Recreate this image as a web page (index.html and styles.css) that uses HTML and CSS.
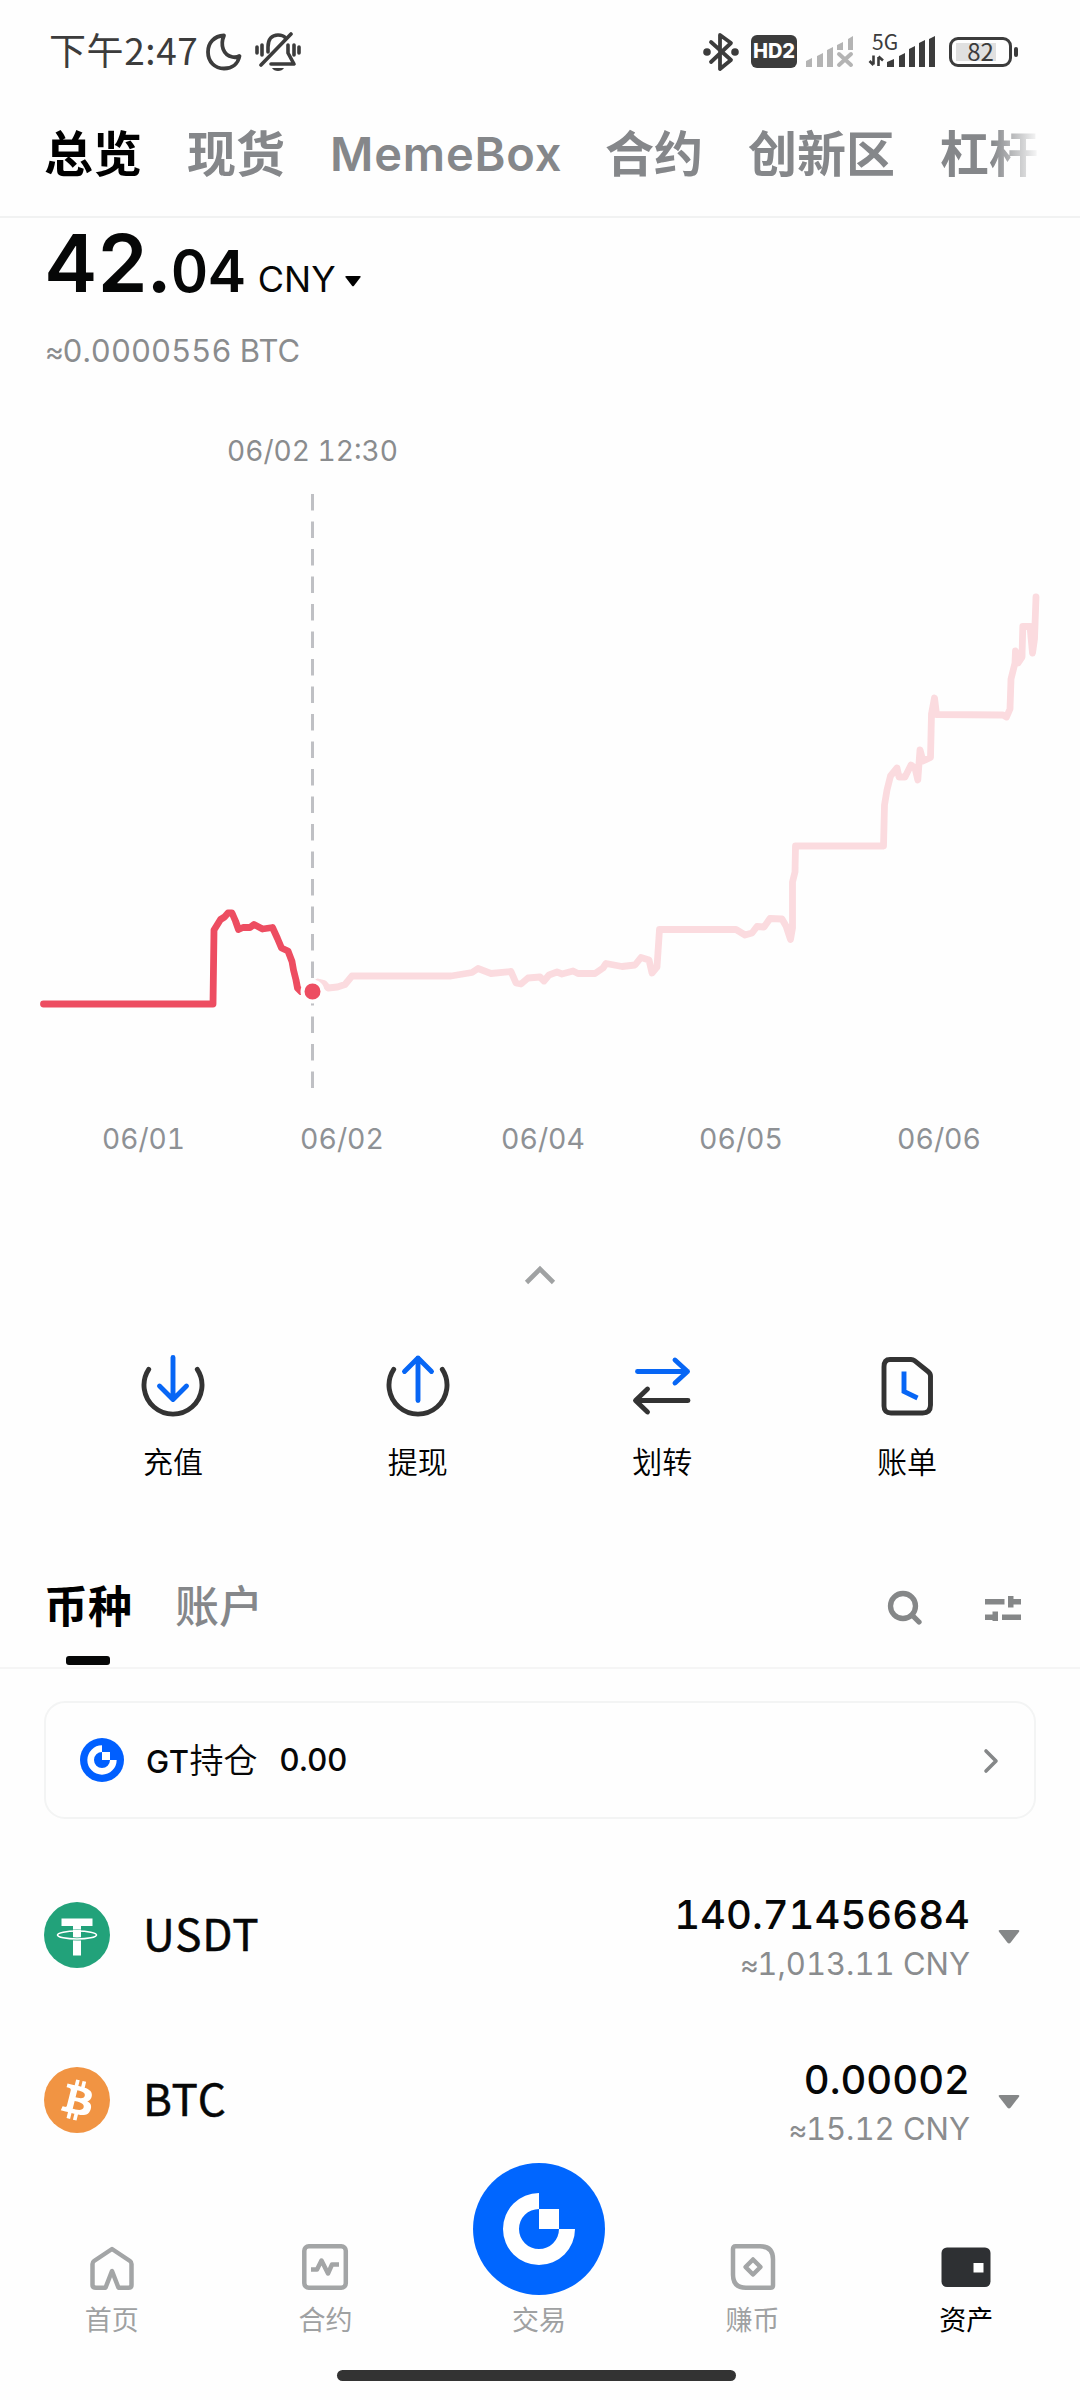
FILE: index.html
```html
<!DOCTYPE html>
<html lang="zh-CN">
<head>
<meta charset="utf-8">
<title>资产总览</title>
<link rel="stylesheet" href="styles.css">
</head>
<body>
<header class="status">
  <div class="status-left">
    <span class="clock">下午2:47</span>
    <svg class="moon" width="36" height="38" viewBox="0 0 36 38"><path d="M18 2.500C8 3 2 10 2 19c0 10 7 16.500 16 16.500 8 0 14-4.500 15.500-12.500-2 1.200-4.500 1.500-7 1C17 22 14 12 18 2.500Z"/></svg>
    <svg class="bell" width="46" height="40" viewBox="0 0 46 40">
      <path class="ln" d="M2 15v6M7 13v10M39 13v10M44 15v6"/>
      <path class="ln" d="M13 20v-5C13 7 17 3 23 3c3.500 0 6 1 7.500 3"/>
      <path class="ln" d="M33 13v8l6 11H16"/>
      <path class="ln" d="M36 2 6 33"/>
      <path d="M17 36h12c-2 4-10 4-12 0Z"/>
    </svg>
  </div>
  <div class="status-right">
    <svg class="bt" width="36" height="40" viewBox="0 0 36 40"><path d="M8 10 28 28 17 37V3l11 8L8 30"/><circle cx="4" cy="20" r="3.800"/><circle cx="32" cy="20" r="3.800"/></svg>
    <span class="hd">HD2</span>
    <svg class="sig-off" width="49" height="32" viewBox="0 0 49 32">
      <path d="M1 31v-6l6-3v9zM12 31V20l6-3v14zM22 31V14l6-3v20zM32 14V9l6-3v8zM43 14V3l5-3v14z"/>
      <path class="cross" d="m34 18 12 11M46 18 34 29"/>
    </svg>
    <div class="cell">
      <span class="net">5G</span>
      <svg width="70" height="32" viewBox="0 0 70 32">
        <path d="M19 31v-5l7-3v8zM31 31V20l6-3v14zM41 31V13l6-3v21zM51 31V7l6-3v27zM61 31V3l6-3v31z"/>
        <path class="arr" d="M5.500 19.500v9M10.500 21v9M1.500 25l4 4M10.500 20.500l4.500 4"/>
      </svg>
    </div>
    <div class="battery"><span class="pct">82</span></div>
  </div>
</header>

<nav class="tabs">
  <span class="tab on">总览</span>
  <span class="tab">现货</span>
  <span class="tab latin">MemeBox</span>
  <span class="tab">合约</span>
  <span class="tab">创新区</span>
  <span class="tab">杠杆</span>
</nav>

<section class="balance">
  <div class="amount">
    <span class="int">42</span><span class="point">.</span><span class="dec">04</span><span class="unit">CNY</span>
    <svg width="16" height="11" viewBox="0 0 16 11"><path d="M1.500 0h13q2 0 .8 1.600L9 9.800q-1 1-2 0L.7 1.600Q-.5 0 1.500 0Z"/></svg>
  </div>
  <div class="btc"><span class="approx">≈</span>0.0000556 BTC</div>
</section>

<section class="chart">
  <svg width="1080" height="760" viewBox="0 420 1080 760">
    <text class="cursor-label" x="312.500" y="461" textLength="171" lengthAdjust="spacingAndGlyphs">06/02 12:30</text>
    <path class="cursor" d="M312.500 494V1089"/>
    <polyline class="future" points="318,982 324,983.500 328,988 337.500,987 345,984.500 352,976 451,976 472,972.500 478,968.500 491,973.500 511,971.500 516,983 521,984 528,978 540,977 544,981 549,975 557,972 562,974 573,971 578,973.500 595,973.500 603,968 606,963.500 622,966.500 635,965 641,957.500 649,960 652,973 657,967 659.500,929.500 736,929.500 745,935 752,933 757,926.500 764,927 770,918.500 782,919 786,926 790.500,939.500 792.500,928 792.500,882 795,872 795.500,846 883.500,846 884.500,805 887,790 890.500,776 897,768 899,777 905,777 911,765 915,768 917.800,780 920,750 923,761 930.500,757.500 931.500,714 934.500,698 936.500,714.500 1003,715 1006.500,717 1010,709 1011,679 1015,663 1015.500,651 1018,663 1022,657 1022.800,626.500 1030,626.500 1032.500,653 1034.500,639 1036,597"/>
    <polyline class="past" points="43.500,1004 213,1004 214,930 220.500,919.500 224.500,917 228,913 232,913 235.500,921 238.500,929.500 243,927.500 250,927.500 254,924.500 262.500,929 272.500,927.500 277.500,938.500 281.500,948 288,951 292,961.500 293.500,970 296,980 297.500,988 301,991.500"/>
    <circle class="dot" cx="312.500" cy="991.500" r="10"/>
    <g class="axis">
      <text x="143.500" y="1149" textLength="83" lengthAdjust="spacingAndGlyphs">06/01</text>
      <text x="342" y="1149" textLength="84" lengthAdjust="spacingAndGlyphs">06/02</text>
      <text x="543" y="1149" textLength="84" lengthAdjust="spacingAndGlyphs">06/04</text>
      <text x="741" y="1149" textLength="84" lengthAdjust="spacingAndGlyphs">06/05</text>
      <text x="939" y="1149" textLength="84" lengthAdjust="spacingAndGlyphs">06/06</text>
    </g>
  </svg>
</section>

<div class="collapse"><svg width="32" height="20" viewBox="0 0 32 20"><path d="m2.500 17.500 13.500-13.500 13.500 13.500"/></svg></div>

<section class="actions">
  <div class="action">
    <svg width="64" height="64" viewBox="0 0 64 64"><path class="dk" d="M7.700 16.300A29 29 0 1 0 56.300 16.300"/><path class="bl" d="M32 4.500V46M18.500 33 32 46.500 45.500 33"/></svg>
    <span>充值</span>
  </div>
  <div class="action">
    <svg width="64" height="64" viewBox="0 0 64 64"><path class="dk" d="M7.700 16.300A29 29 0 1 0 56.300 16.300"/><path class="bl" d="M32 47.500V5M18.500 18.500 32 5 45.500 18.500"/></svg>
    <span>提现</span>
  </div>
  <div class="action">
    <svg width="64" height="64" viewBox="0 0 64 64"><path class="bl" d="M7.500 18.500h50M45 7 57.500 18.500 45 30"/><path class="dk" d="M58 47.500H7M17.500 36 5.500 47.500 17.500 59"/></svg>
    <span>划转</span>
  </div>
  <div class="action">
    <svg width="64" height="64" viewBox="0 0 64 64"><path class="dk" d="M15 6.500h21q2 0 3.500 1.200L53 18.500q2.500 2 2.500 4.500v29q0 8-8 8H16q-7 0-7-7V14q0-7.500 6-7.500Z"/><path class="bl flat" d="M29 18.500V38.500l13.500 6.500"/></svg>
    <span>账单</span>
  </div>
</section>

<section class="assets-head">
  <span class="atab on">币种</span>
  <span class="atab">账户</span>
  <div class="tools">
    <svg width="36" height="36" viewBox="0 0 36 36"><circle class="ring" cx="16" cy="16" r="12.500"/><path class="handle" d="m25 25 7 7"/></svg>
    <svg width="38" height="26" viewBox="0 0 38 26"><path d="M1 4h19.500v5.500H1zM24 1h5.500v3H37v5.500h-7.500v3H24zM1 19.500h7.500v-3H14v11.500H8.500V25H1zM18 19.500h19V25H18z"/></svg>
  </div>
</section>

<section class="gt-card">
  <svg width="44" height="44" viewBox="-66 -66 132 132"><circle class="gt-bg" r="66"/><path class="gt-fg" d="M0-44A44 44 0 1 0 44 0H24A24 24 0 1 1 0-24ZM0-24h24V0H0Z"/></svg>
  <span class="gt-name"><b>GT</b>持仓</span>
  <span class="gt-val">0.00</span>
  <svg class="go" width="18" height="26" viewBox="0 0 18 26"><path d="m4 3 10 10L4 23"/></svg>
</section>

<section class="coins">
  <div class="coin">
    <svg width="66" height="66" viewBox="0 0 66 66"><circle cx="33" cy="33" r="33" fill="#22a27a"/><path fill="#fff" d="M17.500 16.500h31v7.500H37v29.500h-8V24H17.500z"/><ellipse cx="33" cy="33" rx="19.500" ry="4" fill="none" stroke="#22a27a" stroke-width="3"/><ellipse cx="33" cy="33" rx="19.500" ry="4" fill="none" stroke="#fff" stroke-width="1.600"/><path fill="#fff" d="M29 28h8v6.500h-8z"/></svg>
    <span class="sym">USDT</span>
    <div class="vals"><span class="qty">140.71456684</span><span class="fiat"><span class="approx">≈</span>1,013.11 CNY</span></div>
    <svg class="caret" width="22" height="14" viewBox="0 0 22 14"><path d="M2 0h18q2 0 1 1.800l-8.500 11q-1.500 1.600-3 0L1 1.800Q0 0 2 0Z"/></svg>
  </div>
  <div class="coin">
    <svg width="66" height="66" viewBox="0 0 32 32"><circle cx="16" cy="16" r="16" fill="#f19443"/><path fill="#fff" d="M23.189 14.020c.314-2.096-1.283-3.223-3.465-3.975l.708-2.840-1.728-.43-.69 2.765c-.454-.114-.92-.22-1.385-.326l.695-2.783L15.596 6l-.708 2.839c-.376-.086-.746-.17-1.104-.26l.002-.009-2.384-.595-.46 1.846s1.283.294 1.256.312c.7.175.826.638.805 1.006l-.806 3.235c.048.012.11.030.18.057l-.183-.045-1.130 4.532c-.086.212-.303.531-.793.410.018.025-1.256-.313-1.256-.313l-.858 1.978 2.250.561c.418.105.828.215 1.231.318l-.715 2.872 1.727.43.708-2.840c.472.127.930.245 1.378.357l-.706 2.828 1.728.43.715-2.866c2.948.558 5.164.333 6.097-2.333.752-2.146-.037-3.385-1.588-4.192 1.130-.260 1.980-1.003 2.207-2.538zm-3.950 5.538c-.533 2.147-4.148.986-5.320.695l.950-3.805c1.172.293 4.929.872 4.370 3.110zm.535-5.569c-.487 1.953-3.495.960-4.470.717l.860-3.450c.975.243 4.118.696 3.610 2.733z"/></svg>
    <span class="sym">BTC</span>
    <div class="vals"><span class="qty">0.00002</span><span class="fiat"><span class="approx">≈</span>15.12 CNY</span></div>
    <svg class="caret" width="22" height="14" viewBox="0 0 22 14"><path d="M2 0h18q2 0 1 1.800l-8.500 11q-1.500 1.600-3 0L1 1.800Q0 0 2 0Z"/></svg>
  </div>
</section>

<footer class="bottom">
  <nav class="dock">
    <div class="item">
      <svg width="48" height="48" viewBox="0 0 48 48"><path d="M24 6 42 18q1.500 1 1.500 3v21q0 2.700-3 2.700H30.500L24 28l-6.500 16.700H8q-3.500 0-3.500-2.700V21q0-2 1.500-3Z"/></svg>
      <span>首页</span>
    </div>
    <div class="item">
      <svg width="48" height="48" viewBox="0 0 48 48"><rect x="3.300" y="3.300" width="41.500" height="41.500" rx="4.500"/><path d="M10 26.500h6l4.500-9L27 30.500l4-9h7"/></svg>
      <span>合约</span>
    </div>
    <div class="item trade">
      <svg width="132" height="132" viewBox="-66 -66 132 132"><circle class="gt-bg" r="66"/><path class="gt-fg" d="M0-36A36 36 0 1 0 36 0H20A20 20 0 1 1 0-20ZM0-20h20V0H0Z"/></svg>
      <span>交易</span>
    </div>
    <div class="item">
      <svg width="48" height="48" viewBox="0 0 48 48"><path d="M6.500 3.300H31q13 0 13 13v26q0 2.500-2.500 2.500H17q-13 0-13-13V6q0-2.700 2.500-2.700Z"/><path d="m24 16.500 7.500 7.500-7.500 7.500-7.500-7.500Z"/></svg>
      <span>赚币</span>
    </div>
    <div class="item on">
      <svg width="50" height="48" viewBox="0 0 50 48"><rect class="wallet" x=".5" y="4.500" width="49" height="39.500" rx="5.500"/><path class="gt-fg" d="M32.500 20h10v9.500h-10z"/></svg>
      <span>资产</span>
    </div>
  </nav>
  <div class="home-bar"></div>
</footer>
</body>
</html>
```

FILE: styles.css
```css
* { box-sizing: border-box; }
body {
  margin: 0;
  width: 1080px;
  height: 2400px;
  overflow: hidden;
  display: flex;
  flex-direction: column;
  background: #fefefe;
  color: #060707;
  font-family: "Noto Sans CJK SC", sans-serif;
}
svg { display: block; flex: none; }
span { white-space: nowrap; }

/* status bar */
.status {
  height: 103px;
  flex: none;
  display: flex;
  justify-content: space-between;
  align-items: center;
  padding: 0 68px 0 49px;
  color: #3c3c3c;
}
.status-left, .status-right { display: flex; align-items: center; }
.clock { font-size: 37px; line-height: 44px; letter-spacing: .6px; font-weight: 400; padding-bottom: 5px; }
.moon { margin-left: 7px; fill: none; stroke: #3c3c3c; stroke-width: 3.800; stroke-linejoin: round; }
.bell { margin-left: 13px; fill: #3c3c3c; }
.bell .ln { fill: none; stroke: #3c3c3c; stroke-width: 3.600; stroke-linecap: round; stroke-linejoin: round; }
.bt { fill: #3c3c3c; }
.bt path { fill: none; stroke: #3c3c3c; stroke-width: 3.800; stroke-linejoin: round; stroke-linecap: round; }
.hd {
  margin-left: 12px;
  width: 46px;
  height: 33px;
  border-radius: 6px;
  background: #3c3c3c;
  color: #fff;
  font: 800 20px/33px Inter, sans-serif;
  text-align: center;
}
.sig-off { margin-left: 8px; fill: #b4b4b4; }
.sig-off .cross { fill: none; stroke: #b4b4b4; stroke-width: 4; stroke-linecap: round; }
.cell { margin-left: 14px; position: relative; fill: #3c3c3c; }
.cell .arr { fill: none; stroke: #3c3c3c; stroke-width: 2.600; }
.net { position: absolute; left: 4px; top: -5px; font: 400 21px/21px "Noto Sans CJK SC", sans-serif; }
.battery {
  margin-left: 11px;
  position: relative;
  width: 63px;
  height: 30px;
  border: 3px solid #3c3c3c;
  border-radius: 9px;
  padding: 3px 13px 3px 4px;
}
.battery::before { content: ""; display: block; width: 40px; height: 18px; background: #e0e0e0; }
.battery::after { content: ""; position: absolute; right: -9px; top: 7px; width: 4px; height: 10px; border-radius: 2px; background: #3c3c3c; }
.pct { position: absolute; left: 0; right: 0; top: -1px; text-align: center; font: 400 24px/24px "Noto Sans CJK SC", sans-serif; }

/* account tabs */
.tabs {
  height: 115px;
  flex: none;
  display: flex;
  align-items: center;
  gap: 45px;
  padding: 0 0 18px 44px;
  border-bottom: 2px solid #f1f2f2;
  position: relative;
  overflow: hidden;
}
.tabs::after {
  content: "";
  position: absolute;
  right: 0;
  top: 0;
  width: 88px;
  height: 110px;
  background: linear-gradient(90deg, #fefefe00, #fefefe 55%);
}
.tab { font-size: 49px; line-height: 60px; font-weight: 700; color: #85878a; }
.tab.on { color: #000; }
.tab.latin { font-family: Inter, sans-serif; font-weight: 600; font-size: 47px; letter-spacing: .8px; width: 230px; padding-top: 7px; }

/* balance */
.balance { height: 202px; flex: none; padding-left: 45px; font-family: Inter, sans-serif; font-feature-settings: "tnum"; }
.amount { display: flex; align-items: baseline; height: 105px; line-height: 105px; font-weight: 600; margin-top: -8px; }
.int { font-size: 80px; }
.point { font-size: 79px; font-feature-settings: normal; margin: 0 -1px 0 -2px; }
.dec { font-size: 58px; }
.unit { margin-left: 12px; font-size: 36px; font-weight: 400; }
.amount svg { margin-left: 9px; position: relative; top: -5px; }
.btc { margin-top: 16px; font-size: 31px; line-height: 40px; color: #8a8c8e; }
.approx { font-size: .94em; line-height: 1; letter-spacing: -1.500px; }

/* chart */
.chart { height: 760px; flex: none; }
.chart text { font: 400 29px Inter, sans-serif; font-feature-settings: "tnum"; text-anchor: middle; fill: #8e9195; }
.chart .cursor-label { fill: #8a8c8e; }
.cursor { stroke: #bfc0c4; stroke-width: 3; stroke-dasharray: 16.500 11; }
.future, .past { fill: none; stroke-width: 6.800; stroke-linejoin: round; stroke-linecap: round; }
.future { stroke: #fbdbdf; }
.past { stroke: #ed4d61; }
.dot { fill: #ed4d61; stroke: #fefefe; stroke-width: 4; }

.collapse { height: 164px; flex: none; display: flex; justify-content: center; padding-top: 85px; }
.collapse path { fill: none; stroke: #a0a2a3; stroke-width: 4.600; }

/* quick actions */
.actions { height: 156px; flex: none; display: grid; grid-template-columns: repeat(4, 244.700px); justify-content: center; padding-top: 9px; }
.action { display: flex; flex-direction: column; align-items: center; gap: 21px; color: #000; font-size: 30px; line-height: 44px; font-weight: 350; }
.dk, .bl { fill: none; stroke: #333; stroke-width: 4.900; stroke-linecap: round; stroke-linejoin: round; }
.bl { stroke: #0766f5; }
.bl.flat { stroke-linecap: butt; stroke-linejoin: miter; }

/* assets header */
.assets-head { height: 169px; flex: none; border-bottom: 2px solid #f5f5f5; display: flex; align-items: flex-end; gap: 43px; padding: 0 58px 0 44px; }
.atab { position: relative; font-size: 44px; line-height: 60px; height: 93px; font-weight: 500; color: #85878a; }
.atab.on { color: #000; font-weight: 700; }
.atab.on::after { content: ""; position: absolute; left: 22px; bottom: 2px; width: 44px; height: 9px; border-radius: 3px; background: #060707; }
.tools { margin-left: auto; display: flex; align-items: center; gap: 61px; height: 36px; margin-bottom: 41px; fill: #858788; }
.ring, .handle { fill: none; stroke: #858788; stroke-width: 5.300; stroke-linecap: round; }

/* GT holding */
.gt-card {
  flex: none;
  margin: 32px 44px 0;
  height: 118px;
  border: 2.500px solid #f3f4f4;
  border-radius: 21px;
  display: flex;
  align-items: center;
  padding: 0 34px 0 34px;
}
.gt-bg { fill: #0066ff; }
.gt-card .gt-bg { fill: #005fff; }
.gt-fg { fill: #fff; }
.gt-name { margin-left: 22px; font-size: 34px; line-height: 40px; font-weight: 350; padding-bottom: 2px; }
.gt-name b { font: 500 31px Inter, sans-serif; letter-spacing: .5px; }
.gt-val { margin-left: 22px; font: 500 31px/40px Inter, sans-serif; }
.go { margin-left: auto; position: relative; top: 1px; }
.go path { fill: none; stroke: #858788; stroke-width: 3.600; stroke-linecap: round; stroke-linejoin: round; }

/* coin rows */
.coins { margin-top: 33px; flex: none; }
.coin { height: 165px; display: flex; align-items: center; padding: 0 60px 0 44px; }
.sym { margin-left: 33px; font-size: 44px; line-height: 60px; font-weight: 400; padding-bottom: 5px; letter-spacing: .9px; -webkit-text-stroke: .5px currentColor; }
.vals { margin-left: auto; padding-top: 9px; display: flex; flex-direction: column; align-items: flex-end; font-family: Inter, sans-serif; font-feature-settings: "tnum"; }
.qty { font-size: 40px; line-height: 50px; font-weight: 500; }
.fiat { font-size: 31px; line-height: 48px; color: #8a8c8e; }
.caret { margin-left: 28px; fill: #858788; position: relative; top: 2px; }

/* bottom dock */
.bottom { flex: 1; display: flex; flex-direction: column; align-items: center; }
.dock { display: grid; grid-template-columns: repeat(5, 213.600px); height: 188px; padding-top: 61px; margin-right: 2px; }
.item { display: flex; flex-direction: column; align-items: center; gap: 8px; color: #9fa1a2; font-size: 27px; line-height: 40px; font-weight: 400; }
.item path, .item rect { fill: none; stroke: #a3a5a6; stroke-width: 4.500; stroke-linejoin: round; }
.item .gt-fg { fill: #fff; stroke: none; }
.item .wallet { fill: #2e3033; stroke: none; }
.item.on { color: #000; }
.trade { margin-top: -80px; gap: 4px; }
.home-bar { width: 399px; height: 11px; border-radius: 6px; background: #333; margin-right: 7px; }
```
